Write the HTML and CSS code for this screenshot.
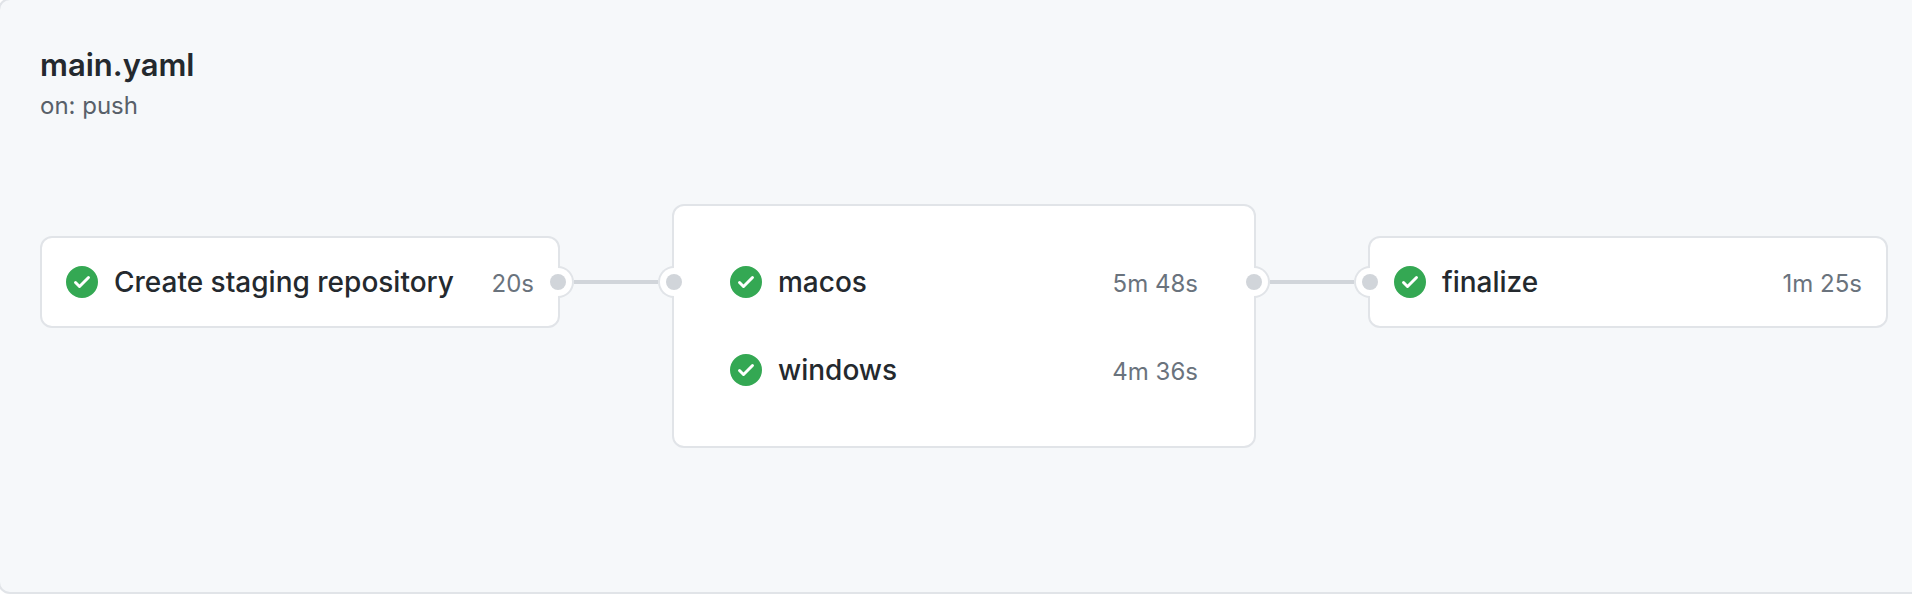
FILE: index.html
```html
<!DOCTYPE html>
<html lang="en">
<head>
<meta charset="utf-8">
<title>main.yaml</title>
<link rel="stylesheet" href="styles.css">
</head>
<body>
<svg class="sprite" aria-hidden="true">
  <symbol id="check" viewBox="0 0 16 16"><path fill-rule="evenodd" d="M8 16A8 8 0 108 0a8 8 0 000 16zm3.78-9.72a.75.75 0 00-1.060-1.060L6.750 9.190 5.280 7.720a.75.75 0 00-1.060 1.060l2 2a.75.75 0 001.060 0l4.500-4.500z"/></symbol>
</svg>
<main class="workflow">
  <header class="workflow-header">
    <h1 class="workflow-title">main.yaml</h1>
    <p class="workflow-trigger">on: push</p>
  </header>
  <div class="graph">
    <section class="card">
      <div class="job">
        <svg class="job-icon" role="img" aria-label="Success"><use href="#check"/></svg>
        <span class="job-name">Create staging repository</span>
        <span class="job-time">20s</span>
      </div>
      <span class="port port-out"></span>
    </section>
    <div class="link"></div>
    <section class="card card-group">
      <div class="job">
        <svg class="job-icon" role="img" aria-label="Success"><use href="#check"/></svg>
        <span class="job-name">macos</span>
        <span class="job-time">5m 48s</span>
      </div>
      <div class="job">
        <svg class="job-icon" role="img" aria-label="Success"><use href="#check"/></svg>
        <span class="job-name">windows</span>
        <span class="job-time">4m 36s</span>
      </div>
      <span class="port port-in"></span>
      <span class="port port-out"></span>
    </section>
    <div class="link"></div>
    <section class="card">
      <div class="job">
        <svg class="job-icon" role="img" aria-label="Success"><use href="#check"/></svg>
        <span class="job-name">finalize</span>
        <span class="job-time">1m 25s</span>
      </div>
      <span class="port port-in"></span>
    </section>
  </div>
</main>
</body>
</html>
```
FILE: styles.css
```css
* { box-sizing: border-box; }

body {
  display: flow-root;
  margin: 0;
  overflow: hidden;
  background: #fff;
  color: #24292e;
  font-family: Inter, "Liberation Sans", sans-serif;
}

.sprite { display: none; }

/* The panel bleeds past the top, left and right edges of the window. */
.workflow {
  min-height: calc(100vh + 2px);
  margin: -2px -16px 0 -2px;
  padding: 42px 38px 40px 40px;
  background: #f6f8fa;
  border: 2px solid #e1e4e8;
  border-radius: 12px;
}

.workflow-title {
  margin: 0;
  font-size: 31px;
  font-weight: 600;
  line-height: 46px;
}

.workflow-trigger {
  margin: 0;
  color: #586069;
  font-size: 24px;
  line-height: 36px;
}

.graph {
  display: grid;
  grid-template-columns: 520fr 112px 584fr 112px 520fr;
  align-items: start;
  padding-top: 80px;
}

.card {
  position: relative;
  margin-top: 32px;
  background: #fff;
  border: 2px solid #e1e4e8;
  border-radius: 12px;
}

.card-group {
  margin-top: 0;
  padding: 32px;
}

.job {
  display: flex;
  align-items: baseline;
  gap: 16px;
  padding: 24px;
}

.job-icon {
  flex: none;
  align-self: center;
  width: 32px;
  height: 32px;
  fill: #34a853;
}

.job-name {
  flex: 1;
  font-size: 28px;
  font-weight: 500;
  line-height: 40px;
  white-space: nowrap;
}

.job-time {
  color: #6a737d;
  font-size: 24px;
  line-height: 32px;
  white-space: nowrap;
}

/* Half ring that opens into the card, with a dot at its centre. */
.port {
  position: absolute;
  top: 28px;
  width: 16px;
  height: 32px;
  background: #fff;
  border: 2px solid #e1e4e8;
}

.card-group .port { top: 60px; }

.port-out {
  right: -16px;
  border-left: 0;
  border-radius: 0 16px 16px 0;
}

.port-in {
  left: -16px;
  border-right: 0;
  border-radius: 16px 0 0 16px;
}

.port::after {
  content: "";
  position: absolute;
  top: 6px;
  width: 16px;
  height: 16px;
  background: #d1d5da;
  border-radius: 50%;
}

.port-out::after { left: -8px; }
.port-in::after { right: -8px; }

.link {
  height: 4px;
  margin: 76px 14px 0;
  background: #d1d5da;
}
```
